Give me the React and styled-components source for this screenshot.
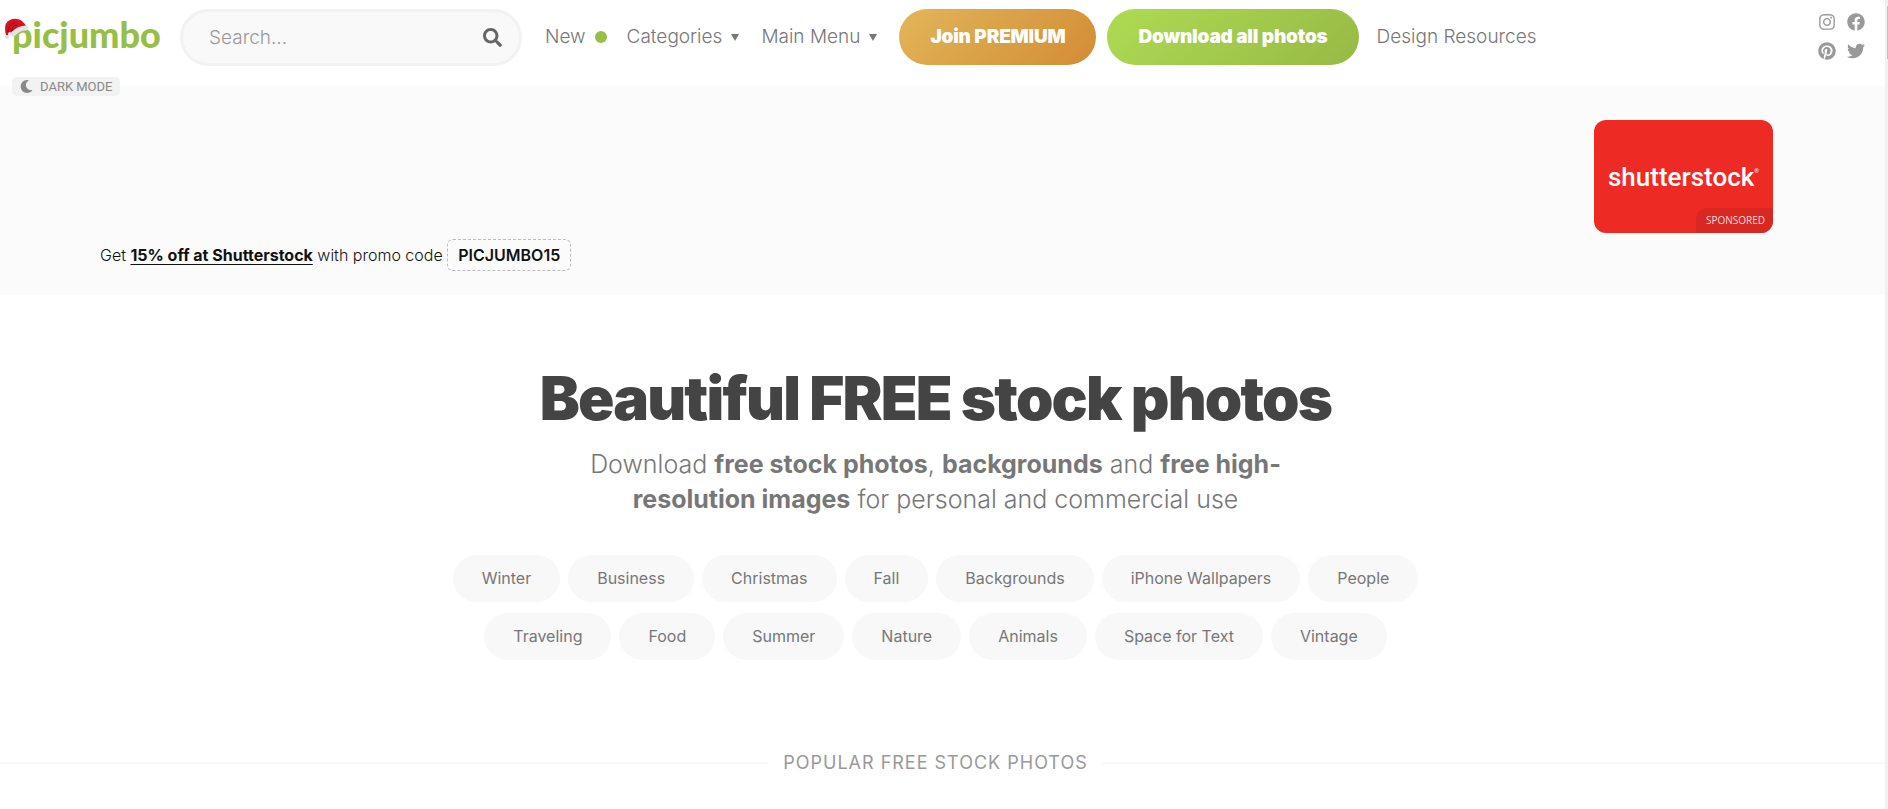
import styled, { createGlobalStyle } from "styled-components";
import {
  FaFacebook,
  FaInstagram,
  FaMoon,
  FaPinterest,
  FaSearch,
  FaTwitter,
} from "react-icons/fa";

const GlobalStyle = createGlobalStyle`
  * {
    box-sizing: border-box;
  }

  html {
    height: 100%;
    overflow: hidden;
  }

  body {
    margin: 0;
    background: #fff;
    color: #777;
    font-family: Inter, "Liberation Sans", sans-serif;
    font-weight: 300;
  }

  a {
    color: inherit;
    text-decoration: none;
  }
`;

const Page = styled.div`
  display: flex;
  min-height: 100vh;
`;

const Main = styled.div`
  flex: 1;
  min-width: 0;
`;

const ScrollTrack = styled.div`
  width: 3px;
  padding: 6px 0 0 2px;
  background: #f1f1f1;
`;

const ScrollThumb = styled.div`
  height: 53px;
  background: #c1c1c1;
`;

const Header = styled.header`
  position: relative;
  display: flex;
  align-items: flex-start;
  height: 86px;
  padding: 9px 20px 0 12px;
`;

const Logo = styled.a`
  position: relative;
  width: 168px;
  color: #97bf45;
  font-family: Lato, sans-serif;
  font-size: 36px;
  font-weight: 900;
  line-height: 50px;
`;

const Hat = styled.svg`
  position: absolute;
  left: -8px;
  top: 9px;
`;

const SearchForm = styled.form`
  display: flex;
  align-items: center;
  width: 342px;
  height: 57px;
  padding: 0 17px 0 26px;
  background: #f9f9f9;
  border: 3px solid #f2f2f2;
  border-radius: 29px;
`;

const SearchInput = styled.input`
  flex: 1;
  min-width: 0;
  padding: 0;
  border: 0;
  outline: 0;
  background: none;
  color: #777;
  font: inherit;
  font-size: 19px;

  &::placeholder {
    color: #999;
    opacity: 1;
  }
`;

const SearchButton = styled.button`
  display: flex;
  padding: 0;
  border: 0;
  background: none;
  color: #666;
  font-size: 19px;
`;

const Nav = styled.nav`
  display: flex;
  align-items: center;
  height: 56px;
  margin-left: 23px;
  font-size: 19px;
  line-height: 24px;
  white-space: nowrap;
`;

const NavLink = styled.a`
  display: flex;
  align-items: center;
  gap: 9px;
  margin-right: 20px;
`;

const Dot = styled.span`
  width: 12px;
  height: 12px;
  border-radius: 50%;
  background: #97bf45;
`;

const Caret = styled.span`
  margin-right: 2px;
  border: 4px solid transparent;
  border-top: 7px solid #777;
  border-bottom: 0;
`;

const Pill = styled.a`
  display: flex;
  align-items: center;
  height: 56px;
  margin-right: ${({ $last }) => ($last ? "18px" : "11px")};
  padding: 0 31px;
  border-radius: 28px;
  background: ${({ $from, $to }) =>
    `linear-gradient(135deg, ${$from}, ${$to})`};
  color: #fff;
  font-weight: 900;
  letter-spacing: -0.01em;
`;

const Social = styled.div`
  display: grid;
  grid-template-columns: 18px 18px;
  gap: 11px;
  margin: 4px 0 0 auto;
  color: #999;
  font-size: 18px;

  a {
    display: flex;
  }
`;

const DarkMode = styled.button`
  position: absolute;
  left: 12px;
  top: 77px;
  display: flex;
  align-items: center;
  gap: 7px;
  height: 19px;
  padding: 0 8px;
  border: 0;
  border-radius: 5px;
  background: #f2f2f2;
  color: #888;
  font-family: Roboto, sans-serif;
  font-size: 13px;
`;

const Sponsor = styled.section`
  display: flex;
  justify-content: space-between;
  align-items: flex-start;
  height: 209px;
  padding: 34px 112px 0 100px;
  background: #fbfbfb;
`;

const Promo = styled.p`
  margin: 119px 0 0;
  color: #111;
  font-size: 16px;
  line-height: 32px;

  a {
    font-weight: 700;
    text-decoration: underline;
    text-underline-offset: 3px;
  }
`;

const PromoCode = styled.strong`
  display: inline-block;
  padding: 0 10px;
  border: 1px dashed #bbb;
  border-radius: 6px;
  font-weight: 600;
  line-height: 30px;
`;

const AdCard = styled.a`
  position: relative;
  display: flex;
  align-items: center;
  justify-content: center;
  width: 179px;
  height: 113px;
  border-radius: 12px;
  overflow: hidden;
  background: #ee2a24;
  color: #fff;
  font-family: Roboto, sans-serif;
  font-size: 26px;
  font-weight: 500;
  line-height: 32px;

  sup {
    align-self: flex-start;
    margin-top: 47px;
    font-size: 6px;
    line-height: 8px;
  }
`;

const Sponsored = styled.span`
  position: absolute;
  right: 0;
  bottom: 0;
  padding: 0 8px 0 10px;
  border-top-left-radius: 12px;
  background: #d92722;
  color: #fbdcdb;
  font-family: "Open Sans", sans-serif;
  font-size: 10px;
  font-weight: 400;
  line-height: 25px;
`;

const Hero = styled.section`
  padding: 69px 14px 0 0;
  text-align: center;
`;

const Title = styled.h1`
  margin: 0;
  color: #444;
  font-size: 60px;
  font-weight: 900;
  letter-spacing: -0.03em;
  line-height: 68px;
`;

const Lead = styled.p`
  max-width: 760px;
  margin: 15px auto 0;
  font-size: 25px;
  line-height: 35px;

  strong {
    font-weight: 700;
  }
`;

const Tags = styled.div`
  display: flex;
  flex-wrap: wrap;
  justify-content: center;
  gap: 11px 8px;
  max-width: 1000px;
  margin: 38px auto 0;
`;

const Tag = styled.a`
  padding: 0 29px;
  border-radius: 24px;
  background: #f8f8f8;
  font-size: 16px;
  font-weight: 400;
  line-height: 47px;
`;

const Divider = styled.h2`
  display: flex;
  align-items: center;
  gap: 14px;
  margin: 90px 0 0;
  color: #999;
  font-size: 18px;
  font-weight: 400;
  letter-spacing: 1px;
  line-height: 26px;
  text-transform: uppercase;

  &::before,
  &::after {
    content: "";
    flex: 1;
    height: 2px;
    background: #f9f9f9;
  }

  &::after {
    margin-right: -14px;
    padding-right: 14px;
    box-sizing: content-box;
  }
`;

const tags = [
  "Winter",
  "Business",
  "Christmas",
  "Fall",
  "Backgrounds",
  "iPhone Wallpapers",
  "People",
  "Traveling",
  "Food",
  "Summer",
  "Nature",
  "Animals",
  "Space for Text",
  "Vintage",
];

const socials = [
  { name: "Instagram", Icon: FaInstagram },
  { name: "Facebook", Icon: FaFacebook },
  { name: "Pinterest", Icon: FaPinterest },
  { name: "Twitter", Icon: FaTwitter },
];

function SantaHat() {
  return (
    <Hat width="26" height="24" viewBox="0 0 26 24" aria-hidden="true">
      <path
        d="M2 17C0 10 1 4 6 2c6-3 14 0 17 8L8 16C6 13 4 13 4 18z"
        fill="#d3131f"
      />
      <path
        d="M4 14C4 9 7 5 11 5M8 13c0-4 2-6 5-6"
        stroke="#8f0c14"
        fill="none"
      />
      <path
        d="M9 16C13 12 18 10 22 10"
        stroke="#e4e4e4"
        strokeWidth="5"
        strokeLinecap="round"
        fill="none"
      />
      <circle cx="3" cy="19" r="2" fill="#dedede" />
    </Hat>
  );
}

function App() {
  return (
    <>
      <GlobalStyle />
      <Page>
        <Main>
          <Header>
            <Logo href="#">
              picjumbo
              <SantaHat />
            </Logo>
            <SearchForm role="search">
              <SearchInput
                type="text"
                placeholder="Search..."
                aria-label="Search"
              />
              <SearchButton type="button" aria-label="Search">
                <FaSearch />
              </SearchButton>
            </SearchForm>
            <Nav>
              <NavLink href="#">
                New <Dot />
              </NavLink>
              <NavLink href="#">
                Categories <Caret />
              </NavLink>
              <NavLink href="#">
                Main Menu <Caret />
              </NavLink>
              <Pill href="#" $from="#e2b659" $to="#d28c35">
                Join PREMIUM
              </Pill>
              <Pill href="#" $from="#aedb52" $to="#97b945" $last>
                Download all photos
              </Pill>
              <NavLink href="#">Design Resources</NavLink>
            </Nav>
            <Social>
              {socials.map(({ name, Icon }) => (
                <a key={name} href="#" aria-label={name}>
                  <Icon />
                </a>
              ))}
            </Social>
            <DarkMode type="button">
              <FaMoon />
              DARK MODE
            </DarkMode>
          </Header>

          <Sponsor>
            <Promo>
              Get <a href="#">15% off at Shutterstock</a> with promo code{" "}
              <PromoCode>PICJUMBO15</PromoCode>
            </Promo>
            <AdCard href="#">
              shutterstock<sup>®</sup>
              <Sponsored>SPONSORED</Sponsored>
            </AdCard>
          </Sponsor>

          <Hero>
            <Title>Beautiful FREE stock photos</Title>
            <Lead>
              Download <strong>free stock photos</strong>,{" "}
              <strong>backgrounds</strong> and{" "}
              <strong>free high-resolution images</strong> for personal and
              commercial use
            </Lead>
            <Tags>
              {tags.map((tag) => (
                <Tag key={tag} href="#">
                  {tag}
                </Tag>
              ))}
            </Tags>
            <Divider>Popular free stock photos</Divider>
          </Hero>
        </Main>
        <ScrollTrack>
          <ScrollThumb />
        </ScrollTrack>
      </Page>
    </>
  );
}

export default App;
